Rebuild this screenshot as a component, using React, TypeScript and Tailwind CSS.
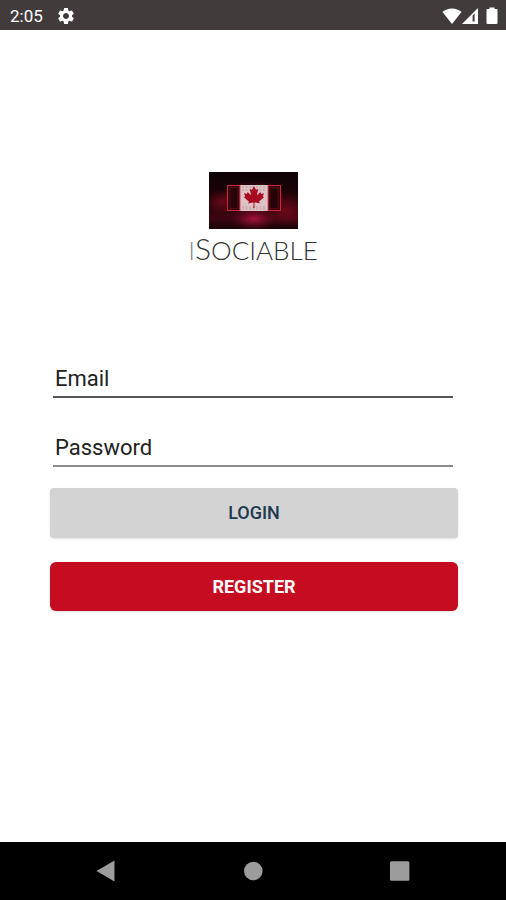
import React from 'react';
import { MdSettings } from 'react-icons/md';
import { FaCanadianMapleLeaf } from 'react-icons/fa';

const StatusBar: React.FC = () => (
  <header className="h-[30px] shrink-0 bg-[#413b3b] text-white flex items-center justify-between pl-[10px] pr-2 pt-px">
    <div className="flex items-center gap-[13px]">
      <span className="text-[17px] leading-5">2:05</span>
      <MdSettings className="w-5 h-5" />
    </div>
    <div className="flex items-center">
      <svg className="w-5 h-4" viewBox="0 0 20 16" fill="currentColor" aria-hidden="true">
        <path d="M10 16 L0.5 4 C3 1.7 6.3 0.5 10 0.5 C13.7 0.5 17 1.7 19.5 4 Z" />
      </svg>
      <svg className="w-4 h-4" viewBox="0 0 16 16" fill="currentColor" aria-hidden="true">
        <path fillRule="evenodd" d="M0 16 L16 0 V16 Z M10.6 7.4 V13.6 H12.6 V5.4 Z" />
      </svg>
      <svg className="w-3 h-[18px] ml-2" viewBox="0 0 12 18" fill="currentColor" aria-hidden="true">
        <path d="M3.5 0.5 H8.5 V2 H10.5 Q11.5 2 11.5 3 V16 Q11.5 17 10.5 17 H1.5 Q0.5 17 0.5 16 V3 Q0.5 2 1.5 2 H3.5 Z" />
      </svg>
    </div>
  </header>
);

const FlagLogo: React.FC = () => (
  <svg className="w-[89px] h-[57px]" viewBox="0 0 89 57" role="img" aria-label="Canadian flag">
    <defs>
      <linearGradient id="base" x1="0" y1="0" x2="0" y2="1">
        <stop offset="0" stopColor="#0c0205" />
        <stop offset="0.6" stopColor="#26040b" />
        <stop offset="0.8" stopColor="#3d0612" />
        <stop offset="1" stopColor="#180306" />
      </linearGradient>
      <radialGradient id="glow">
        <stop offset="0" stopColor="#c3164a" stopOpacity="0.8" />
        <stop offset="1" stopColor="#7d0820" stopOpacity="0" />
      </radialGradient>
      <radialGradient id="smoke">
        <stop offset="0" stopColor="#a80c22" stopOpacity="0.5" />
        <stop offset="1" stopColor="#a80c22" stopOpacity="0" />
      </radialGradient>
    </defs>
    <rect width="89" height="57" fill="url(#base)" />
    <ellipse cx="12" cy="30" rx="16" ry="12" fill="url(#smoke)" />
    <ellipse cx="78" cy="38" rx="22" ry="18" fill="url(#smoke)" />
    <ellipse cx="45" cy="47" rx="24" ry="12" fill="url(#glow)" />
    <ellipse cx="44" cy="26" rx="34" ry="18" fill="url(#smoke)" />
    <rect x="18.5" y="13.5" width="53" height="25" fill="#35040d" stroke="#d22440" />
    <path d="M21 15.5 H29 V36.5 H21 Z M61 15.5 H69 V36.5 H61 Z" fill="#260308" stroke="#6d0c1c" strokeWidth="0.6" />
    <rect x="31" y="13" width="28" height="26" fill="#ddc3c6" />
    <path d="M33 15 H57 M33 18 H57 M33 35 H57 M33 37 H57" stroke="#b08488" strokeWidth="0.7" strokeDasharray="2 1.5" />
    <path d="M31 13 V39 M59 13 V39" stroke="#e14a5c" />
    <FaCanadianMapleLeaf x="34" y="14" size={22} color="#a80c20" />
  </svg>
);

const fieldClass =
  'w-full h-9 px-[2px] pb-[2px] bg-transparent text-[22px] leading-7 text-black placeholder:text-[#222] placeholder:opacity-100 outline-none rounded-none';

const LoginForm: React.FC = () => (
  <form className="w-full flex flex-col" onSubmit={(e) => e.preventDefault()}>
    <div className="pl-[3px] pr-[5px] flex flex-col gap-[33px]">
      <input type="email" aria-label="Email" placeholder="Email" className={`${fieldClass} border-b-2 border-[#555]`} />
      <input type="password" aria-label="Password" placeholder="Password" className={`${fieldClass} border-b-2 border-[#8a8a8a]`} />
    </div>
    <button type="submit" className="mt-[21px] h-[50px] rounded bg-[#d3d3d3] text-[#203850] text-lg font-medium shadow-sm">
      LOGIN
    </button>
    <button type="button" className="mt-6 h-[49px] rounded-md bg-[#c60c20] text-white text-lg font-bold shadow-sm">
      REGISTER
    </button>
  </form>
);

const NavBar: React.FC = () => (
  <nav className="h-[58px] shrink-0 bg-black text-[#9c9c9c] px-8 flex items-center justify-around">
    <button type="button" aria-label="Back">
      <svg className="w-5 h-[22px]" viewBox="0 0 20 22" fill="currentColor"><path d="M0.5 11 L18.5 0.5 V21.5 Z" /></svg>
    </button>
    <button type="button" aria-label="Home">
      <svg className="w-5 h-5" viewBox="0 0 20 20" fill="currentColor"><circle cx="10.3" cy="10" r="9.3" /></svg>
    </button>
    <button type="button" aria-label="Recent apps">
      <svg className="w-5 h-5" viewBox="0 0 20 20" fill="currentColor"><rect x="0" y="0.3" width="19.4" height="19.4" rx="1.5" /></svg>
    </button>
  </nav>
);

const App: React.FC = () => {
  return (
    <div className="min-h-screen flex flex-col bg-white font-['Roboto',sans-serif]">
      <StatusBar />
      <main className="flex-1 pl-[50px] pr-12 pt-[142px]">
        <div className="pr-[2px] mb-[94px] flex flex-col items-center">
          <FlagLogo />
          <h1 className="mt-px font-['Lato',sans-serif] font-light text-[26px] leading-9 text-[#333] uppercase">
            <span className="text-[#888]">i</span>
            <span className="text-[30px]">S</span>ociable
          </h1>
        </div>
        <LoginForm />
      </main>
      <NavBar />
    </div>
  );
};

export default App;
